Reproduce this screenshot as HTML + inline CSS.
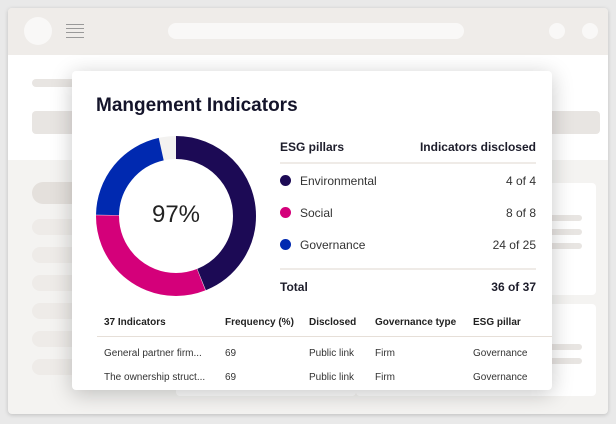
<!DOCTYPE html>
<html><head><style>
*{margin:0;padding:0;box-sizing:border-box}
body{width:616px;height:424px;background:#e9e9e9;position:relative;overflow:hidden;font-family:"Liberation Sans",sans-serif;color:#1d1d2b}
.win{position:absolute;left:8px;top:8px;width:600px;height:406px;background:#f4f3f1;border-radius:4px;box-shadow:0 1px 4px rgba(0,0,0,.18);overflow:hidden}
.hdr{position:absolute;left:0;top:0;width:600px;height:47px;background:#efece9}
.top{position:absolute;left:0;top:47px;width:600px;height:105px;background:#fff}
.a{position:absolute;background:#e8e5e2;border-radius:8px}
.b{position:absolute;background:#eeebe8;border-radius:8px}
.w{position:absolute;background:#fff}
.card{position:absolute;left:72px;top:71px;width:480px;height:319px;background:#fff;border-radius:4px;box-shadow:0 4px 22px rgba(0,0,0,.22)}
.t{position:absolute;font-size:12px;white-space:nowrap;line-height:14px}
.s{position:absolute;font-size:10px;white-space:nowrap;line-height:12px;color:#333}
.d{position:absolute;width:11px;height:11px;border-radius:50%}
.ln{position:absolute;height:2px;background:#efebe7}
</style></head><body>
<div class="win">
<div class="hdr"></div>
<div style="position:absolute;left:16px;top:9px;width:28px;height:28px;border-radius:50%;background:#f9f8f7"></div>
<div style="position:absolute;left:58px;top:16px;width:18px;height:14px;border-top:1px solid #999;border-bottom:1px solid #999"></div>
<div style="position:absolute;left:58px;top:20px;width:18px;height:5px;border-top:1px solid #999;border-bottom:1px solid #999"></div>
<div style="position:absolute;left:160px;top:15px;width:296px;height:16px;border-radius:8px;background:#f9f8f7"></div>
<div style="position:absolute;left:541px;top:15px;width:16px;height:16px;border-radius:50%;background:#f9f8f7"></div>
<div style="position:absolute;left:574px;top:15px;width:16px;height:16px;border-radius:50%;background:#f9f8f7"></div>
<div class="top"></div>
<div class="a" style="left:24px;top:71px;width:60px;height:8px"></div>
<div class="a" style="left:24px;top:103px;width:568px;height:23px;border-radius:4px"></div>
<div class="a" style="left:24px;top:174px;width:150px;height:22px;border-radius:11px;background:#e4e0dc"></div>
<div class="b" style="left:24px;top:211px;width:150px;height:16px"></div>
<div class="b" style="left:24px;top:239px;width:150px;height:16px"></div>
<div class="b" style="left:24px;top:267px;width:150px;height:16px"></div>
<div class="b" style="left:24px;top:295px;width:150px;height:16px"></div>
<div class="b" style="left:24px;top:323px;width:150px;height:16px"></div>
<div class="b" style="left:24px;top:351px;width:150px;height:16px"></div>
<div class="w" style="left:348px;top:175px;width:240px;height:112px;border-radius:4px"></div>
<div class="a" style="left:540px;top:207px;width:34px;height:6px"></div>
<div class="a" style="left:540px;top:221px;width:34px;height:6px"></div>
<div class="a" style="left:540px;top:235px;width:34px;height:6px"></div>
<div class="w" style="left:348px;top:296px;width:240px;height:92px;border-radius:4px"></div>
<div class="a" style="left:540px;top:336px;width:34px;height:6px"></div>
<div class="a" style="left:540px;top:350px;width:34px;height:6px"></div>
<div class="w" style="left:168px;top:300px;width:180px;height:88px;border-radius:4px"></div>
</div>
<div class="card">
<div style="position:absolute;left:24px;top:24px;font-size:19px;font-weight:bold;color:#14142a">Mangement Indicators</div>
<svg style="position:absolute;left:24px;top:65px" width="160" height="160" viewBox="0 0 160 160">
<g transform="rotate(-90 80 80)" fill="none" stroke-width="23">
<circle cx="80" cy="80" r="68.5" stroke="#f3f2f0"/>
<circle cx="80" cy="80" r="68.5" stroke="#1c0a55" stroke-dasharray="188.9 500"/>
<circle cx="80" cy="80" r="68.5" stroke="#d4007a" stroke-dasharray="0 189.4 133.9 500"/>
<circle cx="80" cy="80" r="68.5" stroke="#0029b0" stroke-dasharray="0 323.8 91.5 500"/>
</g>
</svg>
<div style="position:absolute;left:48px;top:130px;width:112px;text-align:center;font-size:24px;color:#222">97%</div>
<div class="t" style="left:208px;top:69px;font-weight:bold;font-size:12px">ESG pillars</div>
<div class="t" style="right:16px;top:69px;font-weight:bold">Indicators disclosed</div>
<div class="ln" style="left:208px;top:91px;width:256px"></div>
<div class="d" style="left:208px;top:104px;background:#1c0a55"></div>
<div class="t" style="left:228px;top:103px;color:#333">Environmental</div>
<div class="t" style="right:16px;top:103px;color:#333">4 of 4</div>
<div class="d" style="left:208px;top:136px;background:#d4007a"></div>
<div class="t" style="left:228px;top:135px;color:#333">Social</div>
<div class="t" style="right:16px;top:135px;color:#333">8 of 8</div>
<div class="d" style="left:208px;top:168px;background:#0029b0"></div>
<div class="t" style="left:228px;top:167px;color:#333">Governance</div>
<div class="t" style="right:16px;top:167px;color:#333">24 of 25</div>
<div class="ln" style="left:208px;top:197px;width:256px"></div>
<div class="t" style="left:208px;top:209px;font-weight:bold">Total</div>
<div class="t" style="right:16px;top:209px;font-weight:bold">36 of 37</div>
<div class="s" style="left:32px;top:246px;font-weight:bold;color:#222">37 Indicators</div>
<div class="s" style="left:153px;top:246px;font-weight:bold;color:#222">Frequency (%)</div>
<div class="s" style="left:237px;top:246px;font-weight:bold;color:#222">Disclosed</div>
<div class="s" style="left:303px;top:246px;font-weight:bold;color:#222">Governance type</div>
<div class="s" style="left:401px;top:246px;font-weight:bold;color:#222">ESG pillar</div>
<div class="ln" style="left:25px;top:265px;width:455px;height:1px;background:#e6dfd8"></div>
<div class="s" style="left:32px;top:277px">General partner firm...</div>
<div class="s" style="left:153px;top:277px">69</div>
<div class="s" style="left:237px;top:277px">Public link</div>
<div class="s" style="left:303px;top:277px">Firm</div>
<div class="s" style="left:401px;top:277px">Governance</div>
<div class="s" style="left:32px;top:301px">The ownership struct...</div>
<div class="s" style="left:153px;top:301px">69</div>
<div class="s" style="left:237px;top:301px">Public link</div>
<div class="s" style="left:303px;top:301px">Firm</div>
<div class="s" style="left:401px;top:301px">Governance</div>
</div>
</body></html>
